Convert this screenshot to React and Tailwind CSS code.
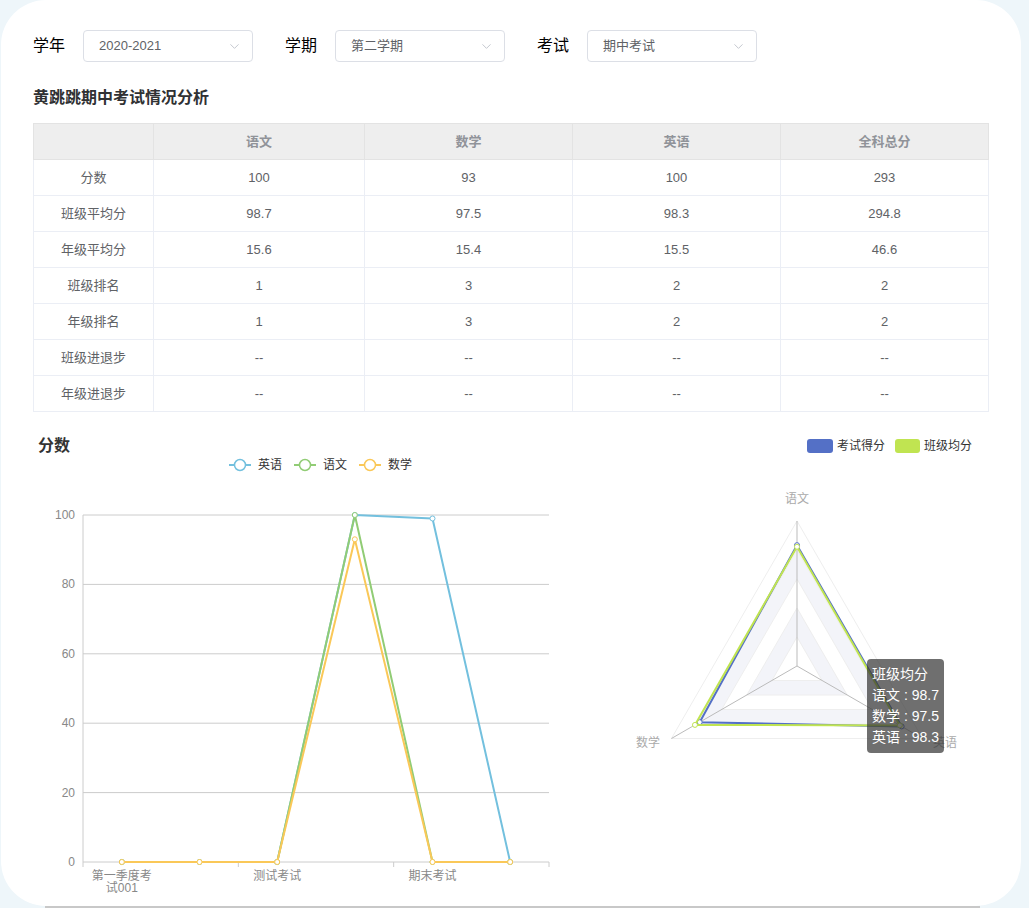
import React from "react";
import { ChevronDown } from "lucide-react";

const FONT = { fontFamily: '"Liberation Sans", "Noto Sans CJK SC", sans-serif' };

const filters = [
  { label: "学年", value: "2020-2021" },
  { label: "学期", value: "第二学期" },
  { label: "考试", value: "期中考试" },
];

const subjects = ["语文", "数学", "英语", "全科总分"];

const rows = [
  ["分数", "100", "93", "100", "293"],
  ["班级平均分", "98.7", "97.5", "98.3", "294.8"],
  ["年级平均分", "15.6", "15.4", "15.5", "46.6"],
  ["班级排名", "1", "3", "2", "2"],
  ["年级排名", "1", "3", "2", "2"],
  ["班级进退步", "--", "--", "--", "--"],
  ["年级进退步", "--", "--", "--", "--"],
];

const colWidths = ["w-[120px]", "w-[211px]", "w-[208px]", "w-[208px]", "w-[208px]"];

// 折线图
const series = [
  { name: "英语", color: "#73c0de", data: [0, 0, 0, 100, 99, 0] },
  { name: "语文", color: "#91cc75", data: [0, 0, 0, 100, 0, 0] },
  { name: "数学", color: "#fac858", data: [0, 0, 0, 93, 0, 0] },
];

const X0 = 83;
const X1 = 549;
const Y100 = 514;
const Y0 = 861;
const band = (X1 - X0) / 6;
const px = (i) => X0 + band * (i + 0.5);
const py = (v) => Y0 - (v / 100) * (Y0 - Y100);

function LineChart() {
  const grid = [0, 20, 40, 60, 80, 100];
  return (
    <svg width="527" height="443" className="block">
      <g transform="translate(-33,-457)" style={FONT}>
        {series.map((s, i) => {
          const lx = 229 + i * 65;
          return (
            <g key={s.name}>
              <line x1={lx} y1="464" x2={lx + 22} y2="464" stroke={s.color} strokeWidth="2" />
              <circle cx={lx + 11} cy="464" r="5.5" fill="#fff" stroke={s.color} strokeWidth="1.5" />
              <text x={lx + 29} y="468" fontSize="12" fill="#333">{s.name}</text>
            </g>
          );
        })}
        {grid.map((g) => (
          <g key={g}>
            <line x1={X0} y1={py(g)} x2={X1} y2={py(g)} stroke="#ccc" strokeWidth="1" />
            <text x="75" y={py(g) + 4} fontSize="12" fill="#888" textAnchor="end">{g}</text>
          </g>
        ))}
        <line x1={X0} y1={Y100} x2={X0} y2={Y0} stroke="#ccc" strokeWidth="1" />
        {[0, 2, 4, 6].map((t) => (
          <line key={t} x1={X0 + band * t} y1={Y0} x2={X0 + band * t} y2={Y0 + 5} stroke="#ccc" />
        ))}
        <text x={px(0)} y="879" fontSize="12" fill="#888" textAnchor="middle">第一季度考</text>
        <text x={px(0)} y="891" fontSize="12" fill="#888" textAnchor="middle">试001</text>
        <text x={px(2)} y="879" fontSize="12" fill="#888" textAnchor="middle">测试考试</text>
        <text x={px(4)} y="879" fontSize="12" fill="#888" textAnchor="middle">期末考试</text>
        {series.map((s) => (
          <g key={s.name}>
            <polyline
              points={s.data.map((v, i) => `${px(i)},${py(v)}`).join(" ")}
              fill="none"
              stroke={s.color}
              strokeWidth="2"
              strokeLinejoin="round"
            />
            {s.data.map((v, i) => (
              <circle key={i} cx={px(i)} cy={py(v)} r="2.5" fill="#fff" stroke={s.color} strokeWidth="1" />
            ))}
          </g>
        ))}
      </g>
    </svg>
  );
}

// 雷达图
const CX = 797;
const CY = 665;
const R = 145;
const MAX = 120;
const angles = [90, 210, -30]; // 语文 数学 英语
const pt = (r, a) => {
  const rad = (a * Math.PI) / 180;
  return [CX + r * Math.cos(rad), CY - r * Math.sin(rad)];
};
const tri = (r) => angles.map((a) => pt(r, a).join(",")).join(" ");
const triPath = (r) => {
  const p = angles.map((a) => pt(r, a));
  return `M${p[0][0]},${p[0][1]}L${p[1][0]},${p[1][1]}L${p[2][0]},${p[2][1]}Z`;
};

const radarSeries = [
  { name: "考试得分", color: "#5470c6", data: [100, 93, 100] },
  { name: "班级均分", color: "#c0e451", data: [98.7, 97.5, 98.3] },
];

function RadarChart() {
  return (
    <svg width="440" height="470" className="block">
      <g transform="translate(-560,-430)" style={FONT}>
        <rect x="807" y="438" width="26" height="14" rx="3" fill="#5470c6" />
        <text x="837" y="449" fontSize="12" fill="#333">考试得分</text>
        <rect x="895" y="438" width="25" height="14" rx="3" fill="#c0e451" />
        <text x="924" y="449" fontSize="12" fill="#333">班级均分</text>

        {[1, 3].map((k) => (
          <path
            key={k}
            d={`${triPath((R * (k + 1)) / 5)} ${triPath((R * k) / 5)}`}
            fill="#f3f4f9"
            fillRule="evenodd"
          />
        ))}
        {[1, 2, 3, 4, 5].map((k) => (
          <polygon key={k} points={tri((R * k) / 5)} fill="none" stroke="#eee" strokeWidth="1" />
        ))}
        {angles.map((a) => {
          const [x, y] = pt(R, a);
          return <line key={a} x1={CX} y1={CY} x2={x} y2={y} stroke="#bbb" strokeWidth="1" />;
        })}
        <text x={CX} y="502" fontSize="12" fill="#aaa" textAnchor="middle">语文</text>
        <text x="648" y="746" fontSize="12" fill="#aaa" textAnchor="middle">数学</text>
        <text x="945" y="746" fontSize="12" fill="#aaa" textAnchor="middle">英语</text>

        {radarSeries.map((s) => {
          const pts = s.data.map((v, i) => pt((v / MAX) * R, angles[i]));
          return (
            <g key={s.name}>
              <polygon points={pts.map((p) => p.join(",")).join(" ")} fill="none" stroke={s.color} strokeWidth="2" />
              {pts.map((p, i) => (
                <circle key={i} cx={p[0]} cy={p[1]} r="2.5" fill="#fff" stroke={s.color} strokeWidth="1" />
              ))}
            </g>
          );
        })}
      </g>
    </svg>
  );
}

export default function App() {
  return (
    <div className="h-[908px] w-full bg-[#eef6fa] overflow-hidden" style={FONT}>
      <div className="ml-[1px] w-[1020px] h-[906px] rounded-[45px] bg-white pl-[32px] pr-[33px] pt-[30px]">
        <div className="flex items-center h-[32px]">
          {filters.map((f, i) => (
            <div key={f.label} className={`flex items-center ${i > 0 ? "ml-[32px]" : ""}`}>
              <span className="text-[16px] text-black w-[50px]">{f.label}</span>
              <div className="w-[170px] h-[32px] border border-[#dcdfe6] rounded-[4px] flex items-center justify-between pl-[15px] pr-[10px]">
                <span className="text-[13px] text-[#606266]">{f.value}</span>
                <ChevronDown size={15} strokeWidth={1.5} className="text-[#c0c4cc]" />
              </div>
            </div>
          ))}
        </div>

        <h2 className="mt-[25px] text-[16px] leading-[22px] font-bold text-[#303133]">黄跳跳期中考试情况分析</h2>

        <table className="mt-[14px] w-[955px] border-collapse table-fixed text-[13px]">
          <thead>
            <tr className="h-[36px] bg-[#eeeeee]">
              <th className={`${colWidths[0]} border border-[#e3e3e3]`}></th>
              {subjects.map((s, i) => (
                <th key={s} className={`${colWidths[i + 1]} border border-[#e3e3e3] font-bold text-[#909399]`}>
                  {s}
                </th>
              ))}
            </tr>
          </thead>
          <tbody>
            {rows.map((r) => (
              <tr key={r[0]} className="h-[36px]">
                {r.map((c, i) => (
                  <td key={i} className="border border-[#ebeef5] text-center text-[#606266]">
                    {c}
                  </td>
                ))}
              </tr>
            ))}
          </tbody>
        </table>

        <div className="mt-[19px] flex">
          <div className="w-[527px] flex flex-col">
            <h3 className="mt-[3px] ml-[5px] h-[24px] leading-[24px] text-[16px] font-bold text-[#333]">分数</h3>
            <LineChart />
          </div>
          <div className="relative w-[440px]">
            <RadarChart />
            <div className="absolute left-[307px] top-[228px] w-[77px] rounded-[4px] bg-[rgba(50,50,50,0.7)] px-[5px] py-[5px] text-[14px] leading-[21px] text-white">
              <div>班级均分</div>
              <div>语文 : 98.7</div>
              <div>数学 : 97.5</div>
              <div>英语 : 98.3</div>
            </div>
          </div>
        </div>
      </div>
      <div className="mx-[45px] h-[2px] bg-[#c8c8c8] w-[935px]"></div>
    </div>
  );
}
